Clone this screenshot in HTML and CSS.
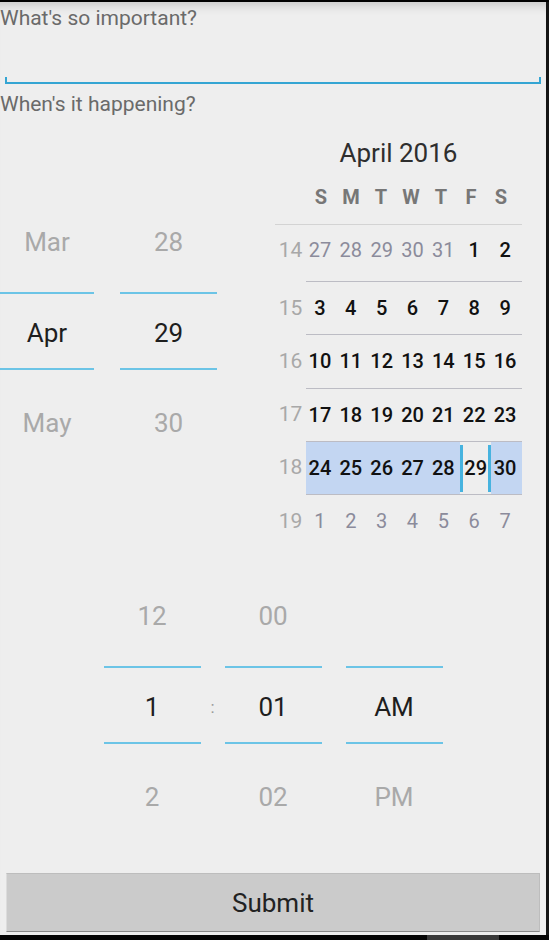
FILE: index.html
```html
<!DOCTYPE html>
<html>
<head>
<meta charset="utf-8">
<link rel="stylesheet" href="styles.css">
</head>
<body>
<div class="device">
  <div class="screen">
    <div class="field-label">What's so important?</div>
    <div class="edit"><div class="edit-line"></div></div>
    <div class="field-label label2">When's it happening?</div>

    <div class="date-row">
      <div class="date-pickers">
        <div class="picker p-month">
          <div class="pk-prev">Mar</div>
          <div class="pk-cur">Apr</div>
          <div class="pk-next">May</div>
        </div>
        <div class="picker p-day">
          <div class="pk-prev">28</div>
          <div class="pk-cur">29</div>
          <div class="pk-next">30</div>
        </div>
      </div>

      <div class="calendar">
        <div class="cal-title">April 2016</div>
        <div class="cal-head">
          <div class="days-head"><span>S</span><span>M</span><span>T</span><span>W</span><span>T</span><span>F</span><span>S</span></div>
        </div>
        <div class="cal-row first">
          <span class="wk">14</span>
          <div class="days"><span class="out">27</span><span class="out">28</span><span class="out">29</span><span class="out">30</span><span class="out">31</span><span>1</span><span>2</span></div>
        </div>
        <div class="cal-row">
          <span class="wk">15</span>
          <div class="days"><span>3</span><span>4</span><span>5</span><span>6</span><span>7</span><span>8</span><span>9</span></div>
        </div>
        <div class="cal-row">
          <span class="wk">16</span>
          <div class="days"><span>10</span><span>11</span><span>12</span><span>13</span><span>14</span><span>15</span><span>16</span></div>
        </div>
        <div class="cal-row">
          <span class="wk">17</span>
          <div class="days"><span>17</span><span>18</span><span>19</span><span>20</span><span>21</span><span>22</span><span>23</span></div>
        </div>
        <div class="cal-row">
          <span class="wk">18</span>
          <div class="days sel"><span>24</span><span>25</span><span>26</span><span>27</span><span>28</span><span class="today"><span class="ring">29</span></span><span>30</span></div>
        </div>
        <div class="cal-row">
          <span class="wk">19</span>
          <div class="days"><span class="out">1</span><span class="out">2</span><span class="out">3</span><span class="out">4</span><span class="out">5</span><span class="out">6</span><span class="out">7</span></div>
        </div>
      </div>
    </div>

    <div class="time-row">
      <div class="picker">
        <div class="pk-prev">12</div>
        <div class="pk-cur">1</div>
        <div class="pk-next">2</div>
      </div>
      <div class="time-sep"><div class="sep-mid">:</div></div>
      <div class="picker">
        <div class="pk-prev">00</div>
        <div class="pk-cur">01</div>
        <div class="pk-next">02</div>
      </div>
      <div class="time-gap"></div>
      <div class="picker">
        <div class="pk-prev"></div>
        <div class="pk-cur">AM</div>
        <div class="pk-next">PM</div>
      </div>
    </div>

    <button class="submit">Submit</button>
  </div>
  <div class="edge"></div>
</div>
<div class="bottom-bar"><div class="nav-block"></div></div>
</body>
</html>
```

FILE: styles.css
```css
html, body {
  margin: 0;
  padding: 0;
}
body {
  background: #000;
  font-family: Roboto, "Noto Sans", sans-serif;
  width: 549px;
  height: 940px;
  overflow: hidden;
}
.device {
  display: flex;
  margin-top: 2px;
  height: 933px;
}
.screen {
  width: 546px;
  background: #eeeeee;
  box-shadow: inset 0 12px 10px -8px rgba(0, 0, 0, 0.16);
  padding-top: 4px;
  box-sizing: border-box;
  display: flex;
  flex-direction: column;
}
.edge {
  width: 3px;
  background: #141414;
}
.bottom-bar {
  height: 5px;
  background: #050505;
  display: flex;
}
.nav-block {
  margin-left: 427px;
  width: 72px;
  background: #3a3a3a;
}

/* text fields */
.field-label {
  font-size: 21px;
  line-height: 24px;
  height: 24px;
  color: #6a6a6a;
  padding-left: 0;
}
.label2 {
  margin-top: 8px;
}
.edit {
  height: 54px;
  display: flex;
  align-items: flex-end;
  padding: 0 5px;
}
.edit-line {
  flex: 1;
  height: 5px;
  border: 2px solid #34a5d3;
  border-top: none;
}

/* date */
.date-row {
  display: flex;
  height: 454px;
}
.date-pickers {
  display: flex;
  gap: 26px;
  margin-top: 80px;
}
.p-month {
  width: 94px;
}
.p-day {
  width: 97px;
}
.picker {
  display: flex;
  flex-direction: column;
  font-size: 26px;
  color: #a9a9a9;
}
.pk-prev,
.pk-cur,
.pk-next {
  display: flex;
  align-items: center;
  justify-content: center;
  box-sizing: border-box;
}
.pk-prev {
  height: 92px;
  margin-bottom: 4px;
}
.pk-cur {
  height: 78px;
  border-top: 2.5px solid #6cc4e6;
  border-bottom: 2.5px solid #6cc4e6;
  padding-top: 3px;
  color: #1e1e1e;
}
.pk-next {
  height: 106px;
}

/* calendar */
.calendar {
  margin-left: 58px;
  width: 247px;
}
.cal-title {
  padding-top: 21px;
  font-size: 26px;
  line-height: 32px;
  text-align: center;
  color: #2e2e2e;
}
.cal-head {
  margin-top: 18px;
  height: 20px;
  padding-bottom: 17px;
  border-bottom: 1px solid #d3d3d3;
}
.days-head {
  margin-left: 31px;
  width: 210px;
  display: grid;
  grid-template-columns: repeat(7, 1fr);
  font-size: 20px;
  line-height: 20px;
  font-weight: bold;
  color: #777777;
  text-align: center;
}
.cal-row {
  display: flex;
  height: 53.25px;
  box-sizing: border-box;
  font-size: 20px;
}
.cal-row.first {
  height: 56px;
  padding-bottom: 6px;
}
.wk {
  width: 31px;
  display: flex;
  align-items: center;
  justify-content: center;
  color: #a8a8a8;
  font-size: 21px;
}
.days {
  flex: 1;
  display: grid;
  grid-template-columns: repeat(7, 1fr);
  border-top: 1px solid #bcbcc4;
  font-weight: 500;
  color: #111;
}
.cal-row.first .days {
  border-top: none;
}
.days > span {
  display: flex;
  align-items: center;
  justify-content: center;
  padding-right: 3px;
}
.days > span.out {
  font-weight: normal;
  color: #8b8b9b;
}
.days.sel {
  background: #c3d6f2;
}
.days > span.today {
  background: #eeeeee;
  padding: 3px 0 2px;
  align-items: stretch;
}
.ring {
  flex: 1;
  display: flex;
  align-items: center;
  justify-content: center;
  border-left: 3px solid #47b3df;
  border-right: 3px solid #47b3df;
}

/* time */
.time-row {
  display: flex;
  justify-content: center;
}
.time-row .picker {
  width: 97px;
}
.time-sep {
  width: 24px;
  padding-top: 96px;
}
.sep-mid {
  height: 78px;
  display: flex;
  align-items: center;
  justify-content: center;
  font-size: 17px;
  color: #999;
  padding-top: 4px;
  box-sizing: border-box;
}
.time-gap {
  width: 24px;
}

/* button */
.submit {
  margin: 23px 0 0 6px;
  width: 534px;
  height: 59px;
  background: #cbcbcb;
  border: 1px solid #bdbdbd;
  border-left-color: #dcdcdc;
  border-bottom: 1px solid #8a8a8a;
  font-family: Roboto, "Noto Sans", sans-serif;
  font-size: 26px;
  color: #222;
  padding: 0;
}
```
